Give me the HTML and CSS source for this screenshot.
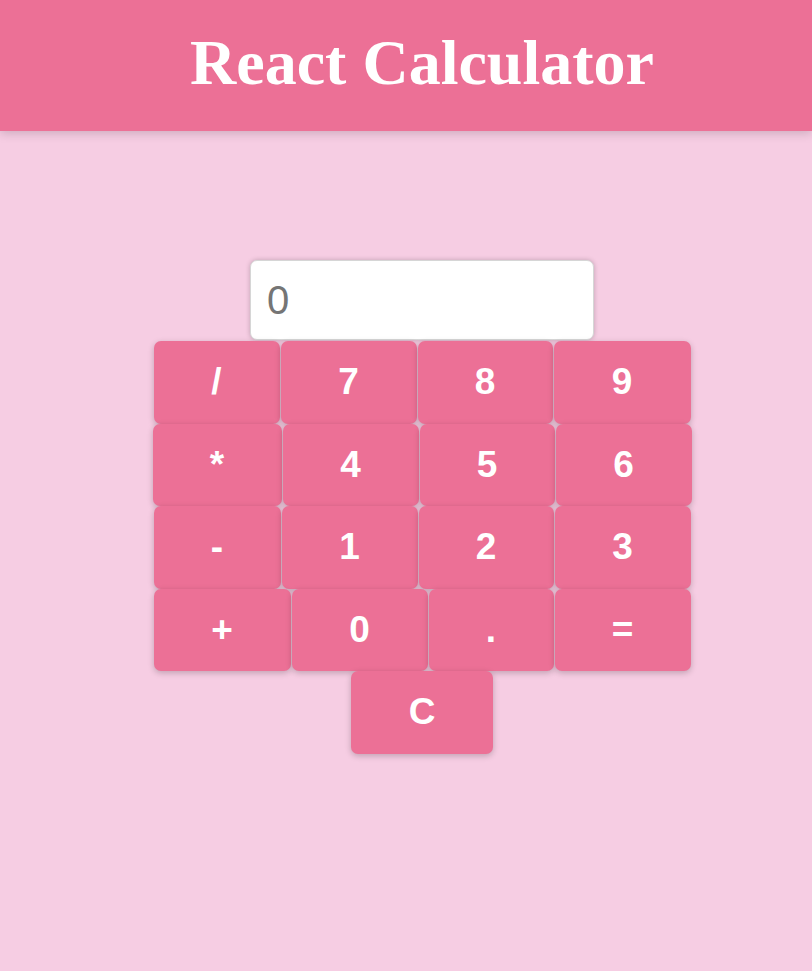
FILE: index.html
```html
<!DOCTYPE html>
<html>
<head>
<meta charset="utf-8">
<link rel="stylesheet" href="styles.css">
</head>
<body>
<header class="header"><h1 class="title">React Calculator</h1></header>
<main class="main">
  <div class="calc">
    <input class="display" type="text" value="0" readonly>
    <div class="row">
      <button class="key w126">/</button><button class="key w136">7</button><button class="key w135">8</button><button class="key w137">9</button>
    </div>
    <div class="row">
      <button class="key w129">*</button><button class="key w136">4</button><button class="key w135">5</button><button class="key w136">6</button>
    </div>
    <div class="row">
      <button class="key w127">-</button><button class="key w136">1</button><button class="key w135">2</button><button class="key w136">3</button>
    </div>
    <div class="row">
      <button class="key w137">+</button><button class="key w136">0</button><button class="key w125">.</button><button class="key w136">=</button>
    </div>
    <div class="row">
      <button class="key w142">C</button>
    </div>
  </div>
</main>
</body>
</html>
```
FILE: styles.css
```css
html, body {
  margin: 0;
  padding: 0;
}
body {
  background: #f6cde3;
  min-height: 971px;
  font-family: "Liberation Sans", Arial, sans-serif;
}
.header {
  background: #ec7096;
  height: 131px;
  box-sizing: border-box;
  padding: 26px 0 0 32px;
  box-shadow: 0 2px 10px rgba(0, 0, 0, 0.18);
  position: relative;
}
.title {
  margin: 0;
  text-align: center;
  font-family: "Liberation Serif", "Times New Roman", serif;
  font-weight: bold;
  font-size: 64px;
  line-height: 74px;
  color: #ffffff;
}
.main {
  padding: 129px 0 0 32px;
}
.calc {
  display: flex;
  flex-direction: column;
  align-items: center;
  gap: 0;
}
.display {
  width: 344px;
  height: 80px;
  margin-bottom: 1px;
  box-sizing: border-box;
  border: 1px solid #d6d6d6;
  border-radius: 7px;
  background: #ffffff;
  box-shadow: 0 0 5px rgba(0, 0, 0, 0.22);
  padding: 0 16px;
  font-family: "Liberation Sans", Arial, sans-serif;
  font-size: 40px;
  color: #757575;
  outline: none;
}
.row {
  display: flex;
  justify-content: center;
  gap: 1px;
}
.key {
  height: 82.5px;
  border: none;
  border-radius: 7px;
  background: #ec7096;
  color: #ffffff;
  font-family: "Liberation Sans", Arial, sans-serif;
  font-weight: bold;
  font-size: 37px;
  box-shadow: 0 2px 6px rgba(0, 0, 0, 0.22);
  padding: 0;
}
.w125 { width: 125px; }
.w126 { width: 126px; }
.w127 { width: 127px; }
.w129 { width: 129px; }
.w135 { width: 135px; }
.w136 { width: 136px; }
.w137 { width: 137px; }
.w142 { width: 142px; }
```
